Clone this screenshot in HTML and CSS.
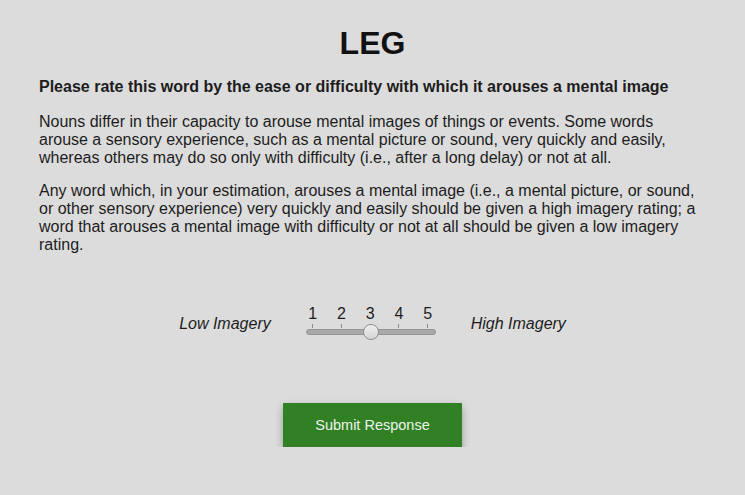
FILE: index.html
```html
<!DOCTYPE html>
<html>
<head>
<meta charset="utf-8">
<link rel="stylesheet" href="styles.css">
</head>
<body>
<main class="page">
  <h1 class="word">LEG</h1>
  <p class="prompt">Please rate this word by the ease or difficulty with which it arouses a mental image</p>
  <p class="text">Nouns differ in their capacity to arouse mental images of things or events. Some words arouse a sensory experience, such as a mental picture or sound, very quickly and easily, whereas others may do so only with difficulty (i.e., after a long delay) or not at all.</p>
  <p class="text">Any word which, in your estimation, arouses a mental image (i.e., a mental picture, or sound, or other sensory experience) very quickly and easily should be given a high imagery rating; a word that arouses a mental image with difficulty or not at all should be given a low imagery rating.</p>
  <div class="scale">
    <span class="anchor">Low Imagery</span>
    <div class="slider">
      <div class="labels">
        <span>1</span><span>2</span><span>3</span><span>4</span><span>5</span>
      </div>
      <div class="ticks">
        <i></i><i></i><i></i><i></i><i></i>
      </div>
      <div class="track"><div class="thumb"></div></div>
    </div>
    <span class="anchor">High Imagery</span>
  </div>
  <div class="actions">
    <button class="submit">Submit Response</button>
  </div>
</main>
</body>
</html>
```
FILE: styles.css
```css
html, body {
  margin: 0;
  background: #dcdcdc;
}
body {
  font-family: "Liberation Sans", Arial, sans-serif;
  color: #1c1c1c;
}
.page {
  width: 667px;
  margin: 0 auto;
  padding-top: 27px;
}
.word {
  margin: 0;
  text-align: center;
  font-size: 32px;
  line-height: 32px;
  font-weight: bold;
  color: #111;
}
.prompt {
  margin: 19px 0 0;
  font-size: 16px;
  line-height: 18px;
  font-weight: bold;
}
.text {
  margin: 15px 0 0;
  font-size: 16px;
  line-height: 18px;
}
.prompt + .text {
  margin-top: 17px;
}
.scale {
  display: flex;
  justify-content: center;
  align-items: flex-start;
  gap: 35px;
  margin-top: 52px;
}
.anchor {
  font-style: italic;
  font-size: 16px;
  line-height: 18px;
  margin-top: 9px;
}
.slider {
  width: 130px;
}
.labels, .ticks {
  display: flex;
  justify-content: space-between;
  padding: 0 3px 0 2px;
}
.labels span {
  width: 10px;
  text-align: center;
  font-size: 16px;
  line-height: 16px;
}
.ticks {
  margin-top: 2px;
  height: 4px;
}
.ticks i {
  width: 10px;
  display: flex;
  justify-content: center;
}
.ticks i::before {
  content: "";
  width: 1px;
  height: 4px;
  background: #8a8a8a;
}
.track {
  position: relative;
  margin-top: 1px;
  height: 4px;
  border-radius: 3px;
  background: #a9a9a9;
  border: 1px solid #959595;
}
.thumb {
  position: absolute;
  left: 56px;
  top: -6px;
  width: 14px;
  height: 14px;
  border-radius: 50%;
  background: linear-gradient(#f0f0f0, #d4d4d4);
  border: 1px solid #8e8e8e;
}
.actions {
  display: flex;
  justify-content: center;
  margin-top: 68px;
}
.submit {
  width: 179px;
  height: 44px;
  border: 0;
  background: #318124;
  color: #eef3ee;
  font-family: "Liberation Sans", Arial, sans-serif;
  font-size: 14.5px;
  box-shadow: 0 4px 8px rgba(0, 0, 0, 0.3);
}
```
